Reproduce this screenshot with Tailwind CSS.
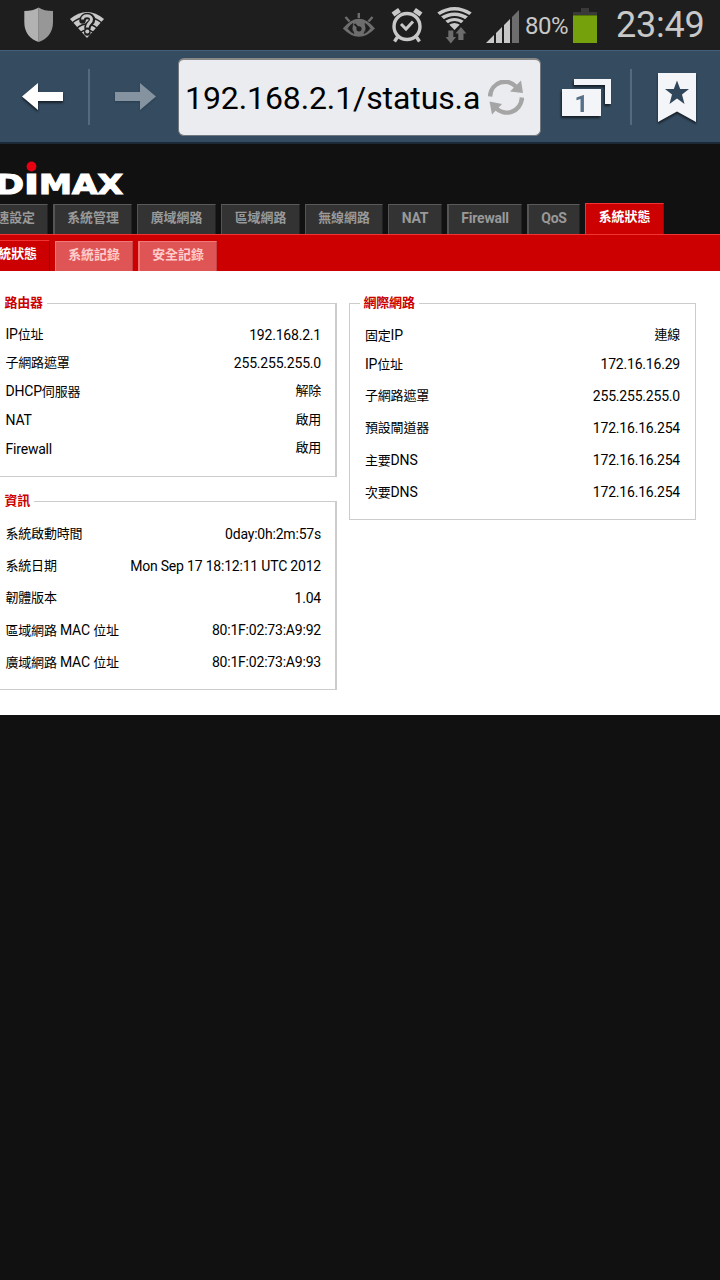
<!DOCTYPE html>
<html lang="zh-Hant">
<head>
  <meta charset="UTF-8">
  <meta name="viewport" content="width=device-width, initial-scale=1.0">
  <title>EDIMAX - 系統狀態</title>
  <script src="https://cdn.jsdelivr.net/npm/@tailwindcss/browser@4"></script>
</head>

<body class="w-[720px] h-[1280px] overflow-hidden bg-[#111111] font-[Roboto,'Noto_Sans_CJK_TC',sans-serif] text-black">

  <!-- Status bar -->
  <header class="flex h-[50px] bg-[#1e1e1e] text-[#c8c8c8]">
    <svg class="ml-6 mt-[7px] shrink-0" width="30" height="36" viewBox="0 0 30 36">
      <path d="M14.7 .5C11 3 6 4 .3 4V15C.3 26 6 32 14.7 35Z" fill="#b2b2b2"/>
      <path d="M14.7 .5C18 3 23 4 29 4V15C29 26 23 32 14.7 35Z" fill="#979797"/>
    </svg>
    <svg class="ml-[15px] mt-[11px] shrink-0" width="36" height="28" viewBox="0 0 36 28">
      <path d="M1 8Q18-6 35 8L18 27Z" fill="#c8c8c8"/>
      <g fill="none" stroke="#1e1e1e" stroke-width="1.5"><path d="M3 12Q18 0 33 12M8 17Q18 9 28 17M12 21Q18 17 24 21"/></g>
      <path d="M13.5 9.500C13.500 3.500 23 3.500 23 9C23 12.500 18.500 12 18.500 16.500M18.300 20.500V21.500" fill="none" stroke="#1e1e1e" stroke-width="6.500" stroke-linecap="round"/>
      <path d="M13.500 8.500C13.500 3.500 22.500 3.500 22.500 8.500C22.500 12 18.300 12 18.300 16.500" fill="none" stroke="#c8c8c8" stroke-width="3"/>
      <circle cx="18.300" cy="20.500" r="2" fill="#c8c8c8"/>
    </svg>
    <svg class="ml-[237px] mt-[12px] shrink-0" width="34" height="26" viewBox="0 0 34 26">
      <path d="M.8 16.500Q17-3 33 16.500Q17 33 .8 16.500Z" fill="#6d6d6d"/>
      <path d="M6 16.500Q8.500 12.500 11 11.500Q8.500 17 12 21.500Q8.500 20 6 16.500ZM28 16.500Q25.500 12.500 23 11.500Q25.500 17 22 21.500Q25.500 20 28 16.500Z" fill="#1e1e1e" stroke="#1e1e1e" stroke-width=".8"/>
      <path d="M12.500 12L17 16.300" stroke="#1e1e1e" stroke-width="1.800"/><circle cx="17" cy="16.800" r="2.600" fill="#1e1e1e"/>
      <path d="M16.800 1V6M3.500 5L7.500 9.500M30.500 5L26.500 9.500" stroke="#6d6d6d" stroke-width="2.400"/>
    </svg>
    <svg class="ml-[14px] mt-[7px] shrink-0" width="34" height="36" viewBox="0 0 34 36">
      <g fill="none" stroke="#c8c8c8">
        <circle cx="17" cy="19.500" r="13" stroke-width="3.400"/>
        <path d="M11 17L16 22L23 14.500" stroke-width="3"/>
        <path d="M7.500 30L4.500 34.500M26.500 30L29.500 34.500" stroke-width="3.400"/>
        <path d="M3 7.500L9.500 3M31 7.500L24.500 3" stroke-width="5"/>
      </g>
    </svg>
    <svg class="ml-[13px] mt-[6px] shrink-0" width="35" height="38" viewBox="0 0 35 38">
      <path d="M17.500 24L.3 6.500Q17.500-4.500 34.700 6.500Z" fill="#c8c8c8"/>
      <g fill="none" stroke="#1e1e1e" stroke-width="2">
        <path d="M2 10.500Q17.500 .5 33 10.500M6 15Q17.500 7 29 15M10 19Q17.500 13 25 19"/>
      </g>
      <path d="M11.300 24.500H16.300V31H19L13.800 37.500L8.600 31H11.300Z" fill="#6d6d6d"/>
      <path d="M21.300 34V27.500H18.500L24 21L29.300 27.500H26.500V34Z" fill="#6d6d6d"/>
    </svg>
    <svg class="ml-[14px] mt-[9px] shrink-0" width="34" height="35" viewBox="0 0 34 35">
      <path d="M0 34L8 26V34ZM10 24L16 18V34H10ZM18 16L24 10V34H18Z" fill="#c8c8c8"/>
      <path d="M26 8L33 1V34H26Z" fill="#6d6d6d"/>
    </svg>
    <span class="ml-[5px] mt-[11px] w-[48px] text-2xl leading-[30px] whitespace-nowrap tracking-[-0.5px]">80%</span>
    <svg class="mt-2 shrink-0" width="24" height="35" viewBox="0 0 24 35">
      <path d="M8 0H16V4H24V7H0V4H8Z" fill="#3a3a3a"/>
      <path d="M0 7H24V35H0Z" fill="#74a10c"/><path d="M0 7H24V8H0Z" fill="#537506"/>
    </svg>
    <span class="ml-[19px] mt-1 text-[36px] leading-[42px] whitespace-nowrap tracking-[-0.2px]">23:49</span>
  </header>

  <!-- Browser toolbar -->
  <nav class="flex items-start h-[94px] bg-[#344b60] border-t border-t-[#435f77] border-b-2 border-b-[#1c2a38]">
    <svg class="ml-5 mt-[28px] shrink-0 drop-shadow-[0_2px_1px_#00000090]" width="46" height="36" viewBox="0 0 46 36">
      <path d="M2 17.500L18 4V13H43V22H18V31Z" fill="#fff"/>
    </svg>
    <div class="ml-[22px] mt-[18px] w-[2px] h-14 bg-[#566a7d]"></div>
    <svg class="ml-[23px] mt-[28px] shrink-0 drop-shadow-[0_1px_1px_#00000030]" width="46" height="36" viewBox="0 0 46 36">
      <path d="M43 17.500L27 4V13H2V22H27V31Z" fill="#8593a1"/>
    </svg>
    <div class="flex items-center ml-[19px] mt-[7px] w-[363px] h-[78px] shrink-0 rounded-md border border-[#72777d] border-t-2 border-t-[#888] bg-[#ebecf0] pl-[6px]">
      <span class="w-[303px] text-[32px] leading-[38px] whitespace-nowrap tracking-[-0.1px]">192.168.2.1/status.a</span>
      <svg class="shrink-0" width="36" height="36" viewBox="0 0 36 36">
        <g fill="none" stroke="#a5a5a5" stroke-width="4.500">
          <path d="M2 16.500C3 1.500 20-3 29 7.500"/><path d="M34 17.500C33 32.500 16 37.500 7 27"/>
        </g>
        <path d="M33 .5L35 13L22 11.500Z" fill="#a5a5a5"/>
        <path d="M1.500 21.500L14 24L4 34.500Z" fill="#a5a5a5"/>
      </svg>
    </div>
    <svg class="ml-[18px] mt-[24px] shrink-0 drop-shadow-[-1px_2px_1px_#00000099]" width="54" height="46" viewBox="0 0 54 46">
      <path d="M15 4H52V29H46V10H15Z" fill="#f4f5f8"/>
      <path d="M3 14H42V41H3Z" fill="#f4f5f8"/>
      <text x="22.300" y="36.500" text-anchor="middle" font-family="Roboto" font-weight="700" font-size="24" fill="#557087">1</text>
    </svg>
    <div class="ml-[17px] mt-[18px] w-[2px] h-14 bg-[#566a7d]"></div>
    <svg class="ml-6 mt-[19px] shrink-0 drop-shadow-[0_2px_1px_#00000099]" width="42" height="54" viewBox="0 0 42 54">
      <path d="M2 3H40V52L21 41.500L2 52Z" fill="#f4f5f8"/>
      <path d="M21 10.500L24.200 19H33L26 24.500L28.500 34L21 28.500L13.500 34L16 24.500L9 19H17.800Z" fill="#2f465b"/>
    </svg>
  </nav>

  <!-- Logo, first letter scrolled out of view -->
  <div class="h-[59px]">
    <svg width="130" height="56" viewBox="0 0 130 56" font-family="DejaVu Sans" font-weight="700" font-size="27" fill="#fff" stroke="#fff" stroke-width="1.200">
      <text x="-5" y="50" textLength="29" lengthAdjust="spacingAndGlyphs">D</text>
      <text x="24" y="50" textLength="15" lengthAdjust="spacingAndGlyphs">I</text>
      <text x="39" y="50" textLength="84" lengthAdjust="spacingAndGlyphs">MAX</text>
      <circle cx="31.500" cy="22.500" r="4.900" fill="#e60012" stroke="none"/>
    </svg>
  </div>

  <!-- Main tabs -->
  <div class="flex items-end gap-[5px] h-[31px] text-[12.9px] font-bold text-[#999999] text-center leading-[26px] whitespace-nowrap">
    <div class="flex justify-end w-12 h-[30px] bg-[#333] border-t border-r border-t-[#5a5a5a] border-r-[#222] pr-[12px]">速設定</div>
    <div class="w-[79px] h-[30px] bg-[#333] border-t border-l-2 border-r border-t-[#5a5a5a] border-l-[#555] border-r-[#222]">系統管理</div>
    <div class="w-[79px] h-[30px] bg-[#333] border-t border-l border-r border-t-[#5a5a5a] border-l-[#555] border-r-[#222]">廣域網路</div>
    <div class="w-[79px] h-[30px] bg-[#333] border-t border-l border-r border-t-[#5a5a5a] border-l-[#555] border-r-[#222]">區域網路</div>
    <div class="w-[78px] h-[30px] bg-[#333] border-t border-l border-r border-t-[#5a5a5a] border-l-[#555] border-r-[#222]">無線網路</div>
    <div class="w-[54px] h-[30px] bg-[#333] border-t border-l border-r border-t-[#5a5a5a] border-l-[#555] border-r-[#222] text-sm/[26px] tracking-[-0.2px]">NAT</div>
    <div class="w-[75px] h-[30px] bg-[#333] border-t border-l-2 border-r border-t-[#5a5a5a] border-l-[#555] border-r-[#222] text-sm/[26px] tracking-[-0.2px]">Firewall</div>
    <div class="w-[53px] h-[30px] bg-[#333] border-t border-l-2 border-r border-t-[#5a5a5a] border-l-[#555] border-r-[#222] text-sm/[26px] tracking-[-0.2px]">QoS</div>
    <div class="w-[79px] h-[31px] bg-[#cc0000] border-t border-l border-r border-t-[#f03333] border-l-[#f03333] border-r-[#a00] text-white">系統狀態</div>
  </div>

  <!-- Sub tabs -->
  <div class="flex items-end h-[37px] bg-[#cc0000] border-t border-t-[#f03333] text-[12.9px] font-bold text-center leading-[26px] whitespace-nowrap">
    <div class="flex justify-end w-[50px] h-[31px] border-t border-r border-t-[#f03333] border-r-[#880000] pr-[12px] text-white">統狀態</div>
    <div class="ml-[5px] w-[78px] h-[30px] bg-[#df5555] border-t border-l border-r border-t-[#f27777] border-l-[#f27777] border-r-[#c84444] text-[#ffcccc]">系統記錄</div>
    <div class="ml-[5px] w-[79px] h-[30px] bg-[#df5555] border-t border-l-2 border-r border-t-[#f27777] border-l-[#f27777] border-r-[#c84444] text-[#ffcccc]">安全記錄</div>
  </div>

  <!-- Status panels -->
  <main class="flex items-start gap-3 h-[444px] bg-white pt-[22px] text-sm tracking-[-0.2px] whitespace-nowrap">
    <div class="flex flex-col gap-[14px] w-[337px]">
      <fieldset class="h-[184px] border border-l-0 border-r-2 border-[#cccccc] pl-[5.5px] pr-[14px]">
        <legend class="-ml-[5.5px] pl-[4.5px] pr-1 h-5 text-[13px] leading-[19px] font-bold text-[#cc0000]">路由器</legend>
        <div class="pt-[7.5px]">
          <div class="flex items-center justify-between h-[28.5px]"><span>IP<span class="text-[13px]">位址</span></span><span>192.168.2.1</span></div>
          <div class="flex items-center justify-between h-[28.5px]"><span class="text-[13px]">子網路遮罩</span><span>255.255.255.0</span></div>
          <div class="flex items-center justify-between h-[28.5px]"><span>DHCP<span class="text-[13px]">伺服器</span></span><span class="text-[13px]">解除</span></div>
          <div class="flex items-center justify-between h-[28.5px]"><span>NAT</span><span class="text-[13px]">啟用</span></div>
          <div class="flex items-center justify-between h-[28.5px]"><span>Firewall</span><span class="text-[13px]">啟用</span></div>
        </div>
      </fieldset>

      <fieldset class="h-[199px] border border-l-0 border-r-2 border-[#cccccc] pl-[5.5px] pr-[14px]">
        <legend class="-ml-[5.5px] pl-[4.5px] pr-1 h-5 text-[13px] leading-[19px] font-bold text-[#cc0000]">資訊</legend>
        <div class="pt-[7px]">
          <div class="flex items-center justify-between h-8"><span class="text-[13px]">系統啟動時間</span><span>0day:0h:2m:57s</span></div>
          <div class="flex items-center justify-between h-8"><span class="text-[13px]">系統日期</span><span>Mon Sep 17 18:12:11 UTC 2012</span></div>
          <div class="flex items-center justify-between h-8"><span class="text-[13px]">韌體版本</span><span>1.04</span></div>
          <div class="flex items-center justify-between h-8"><span><span class="text-[13px]">區域網路</span> MAC <span class="text-[13px]">位址</span></span><span>80:1F:02:73:A9:92</span></div>
          <div class="flex items-center justify-between h-8"><span><span class="text-[13px]">廣域網路</span> MAC <span class="text-[13px]">位址</span></span><span>80:1F:02:73:A9:93</span></div>
        </div>
      </fieldset>
    </div>

    <fieldset class="w-[347px] h-[227px] border border-[#cccccc] px-[15px]">
      <legend class="-ml-[5px] pl-[3.5px] pr-1 h-5 text-[13px] leading-[19px] font-bold text-[#cc0000]">網際網路</legend>
      <div class="pt-[9px]">
        <div class="flex items-center justify-between h-[26px]"><span><span class="text-[13px]">固定</span>IP</span><span class="text-[13px]">連線</span></div>
        <div class="flex items-center justify-between h-8"><span>IP<span class="text-[13px]">位址</span></span><span>172.16.16.29</span></div>
        <div class="flex items-center justify-between h-8"><span class="text-[13px]">子網路遮罩</span><span>255.255.255.0</span></div>
        <div class="flex items-center justify-between h-8"><span class="text-[13px]">預設閘道器</span><span>172.16.16.254</span></div>
        <div class="flex items-center justify-between h-8"><span><span class="text-[13px]">主要</span>DNS</span><span>172.16.16.254</span></div>
        <div class="flex items-center justify-between h-8"><span><span class="text-[13px]">次要</span>DNS</span><span>172.16.16.254</span></div>
      </div>
    </fieldset>
  </main>

</body>
</html>
